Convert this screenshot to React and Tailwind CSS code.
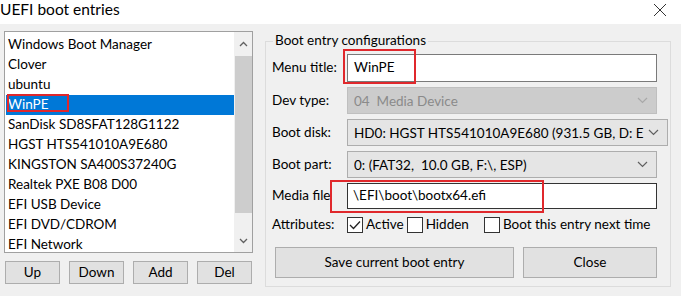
import React from "react";

const entries = [
  "Windows Boot Manager",
  "Clover",
  "ubuntu",
  "WinPE",
  "SanDisk SD8SFAT128G1122",
  "HGST HTS541010A9E680",
  "KINGSTON SA400S37240G",
  "Realtek PXE B08 D00",
  "EFI USB Device",
  "EFI DVD/CDROM",
  "EFI Network",
];

function Chevron({ color = "#606060" }) {
  return (
    <svg width="11" height="7" viewBox="0 0 11 7" className="shrink-0">
      <path d="M1 1 L5.5 5.5 L10 1" fill="none" stroke={color} strokeWidth="1.2" />
    </svg>
  );
}

function Combo({ value, disabled }) {
  return (
    <div
      className={`flex items-center h-[27px] pl-[6px] pr-[8px] border ${
        disabled
          ? "bg-[#cccccc] border-[#bfbfbf] text-[#8a8a8a]"
          : "bg-[#e5e5e5] border-[#adadad] text-[#000]"
      }`}
    >
      <span className="flex-1 whitespace-pre overflow-hidden leading-[20px] pr-[4px]">{value}</span>
      <Chevron color={disabled ? "#a8a8a8" : "#606060"} />
    </div>
  );
}

function Check({ checked, label, className = "" }) {
  return (
    <div className={`flex items-center gap-[3px] ${className}`}>
      <div className="w-[16px] h-[16px] border border-[#333] bg-white flex items-center justify-center">
        {checked && (
          <svg width="12" height="10" viewBox="0 0 12 10">
            <path d="M1 5 L4.5 8.5 L11 1.5" fill="none" stroke="#222" strokeWidth="1.3" />
          </svg>
        )}
      </div>
      <span>{label}</span>
    </div>
  );
}

function Row({ label, children }) {
  return (
    <div className="flex items-center">
      <span className="w-[75px] shrink-0">{label}</span>
      <div className="flex-1">{children}</div>
    </div>
  );
}

export default function App() {
  return (
    <div
      className="w-[681px] h-[296px] bg-[#f0f0f0] text-[13.5px] text-black overflow-hidden leading-none"
      style={{ fontFamily: 'Lato, "Noto Sans", sans-serif' }}
    >
      {/* title bar */}
      <div className="h-[24px] bg-white flex items-center justify-between">
        <span className="text-[15.5px] -mt-[5px]">UEFI boot entries</span>
        <svg width="14" height="14" viewBox="0 0 14 14" className="mr-[14px] -mt-[4px]">
          <path d="M1 1 L13 13 M13 1 L1 13" stroke="#333" strokeWidth="1" />
        </svg>
      </div>

      <div className="flex">
        {/* left column */}
        <div className="pl-[4px] pt-[7px] w-[253px] shrink-0">
          <div className="h-[222px] border border-[#a0a0a0] bg-white flex">
            <div className="flex-1 pt-[3px] pl-px">
              {entries.map((e) => (
                <div
                  key={e}
                  className={`h-[20px] flex items-center pl-[2px] ${
                    e === "WinPE" ? "bg-[#0078d7] text-white" : ""
                  }`}
                >
                  {e === "WinPE" ? (
                    <span className="relative">
                      <span className="absolute -left-[1px] -top-[4px] w-[62px] h-[18px] border-2 border-[#e0282c]" />
                      {e}
                    </span>
                  ) : (
                    e
                  )}
                </div>
              ))}
            </div>
            <div className="w-[18px] bg-[#f0f0f0] flex flex-col items-center">
              <div className="h-[24px] flex items-center justify-center">
                <svg width="9" height="6" viewBox="0 0 9 6">
                  <path d="M1 5 L4.5 1.5 L8 5" fill="none" stroke="#606060" strokeWidth="1.3" />
                </svg>
              </div>
              <div className="w-[17px] h-[157px] bg-[#cdcdcd]" />
              <div className="flex-1 flex items-end justify-center pb-[8px]">
                <svg width="9" height="6" viewBox="0 0 9 6">
                  <path d="M1 1 L4.5 4.5 L8 1" fill="none" stroke="#606060" strokeWidth="1.3" />
                </svg>
              </div>
            </div>
          </div>
          <div className="flex gap-[9px] pl-px mt-[8px]">
            {["Up", "Down", "Add", "Del"].map((b) => (
              <div
                key={b}
                className="w-[55px] h-[23px] border border-[#adadad] bg-[#e1e1e1] flex items-center justify-center"
              >
                {b}
              </div>
            ))}
          </div>
        </div>

        {/* right group box */}
        <div className="ml-[12px] mt-[17px] w-[406px] h-[246px] border border-[#dcdcdc] relative px-[6px] pt-[12px]">
          <span className="absolute left-[7px] -top-[8px] bg-[#f0f0f0] px-[2px]">
            Boot entry configurations
          </span>
          <div className="flex flex-col gap-[5px] pr-[7px]">
            <Row label="Menu title:">
              <div className="relative h-[28px] border border-[#7a7a7a] bg-white flex items-center pl-[6px]">
                <span className="absolute -left-[5px] -top-[6px] w-[73px] h-[35px] border-2 border-[#e0282c]" />
                WinPE
              </div>
            </Row>
            <Row label="Dev type:">
              <Combo value="04  Media Device" disabled />
            </Row>
            <Row label="Boot disk:">
              <Combo value="HD0: HGST HTS541010A9E680 (931.5 GB, D: E" />
            </Row>
            <Row label="Boot part:">
              <Combo value="0: (FAT32,  10.0 GB, F:\, ESP)" />
            </Row>
            <Row label="Media file">
              <div className="relative h-[26px] border border-[#333] bg-white flex items-center pl-[5px]">
                <span className="absolute -left-[18px] -top-[4px] w-[214px] h-[33px] border-2 border-[#e0282c]" />
                \EFI\boot\bootx64.efi
              </div>
            </Row>
          </div>
          <div className="flex items-center mt-[8px]">
            <span className="w-[75px] shrink-0">Attributes:</span>
            <Check checked label="Active" />
            <Check label="Hidden" className="ml-[3px]" />
            <Check label="Boot this entry next time" className="ml-[15px]" />
          </div>
          <div className="flex gap-[9px] mt-[14px] pl-[3px] pr-[7px]">
            <div className="w-[239px] h-[31px] border border-[#adadad] bg-[#e1e1e1] flex items-center justify-center">
              Save current boot entry
            </div>
            <div className="flex-1 h-[31px] border border-[#adadad] bg-[#e1e1e1] flex items-center justify-center">
              Close
            </div>
          </div>
        </div>
      </div>
    </div>
  );
}
